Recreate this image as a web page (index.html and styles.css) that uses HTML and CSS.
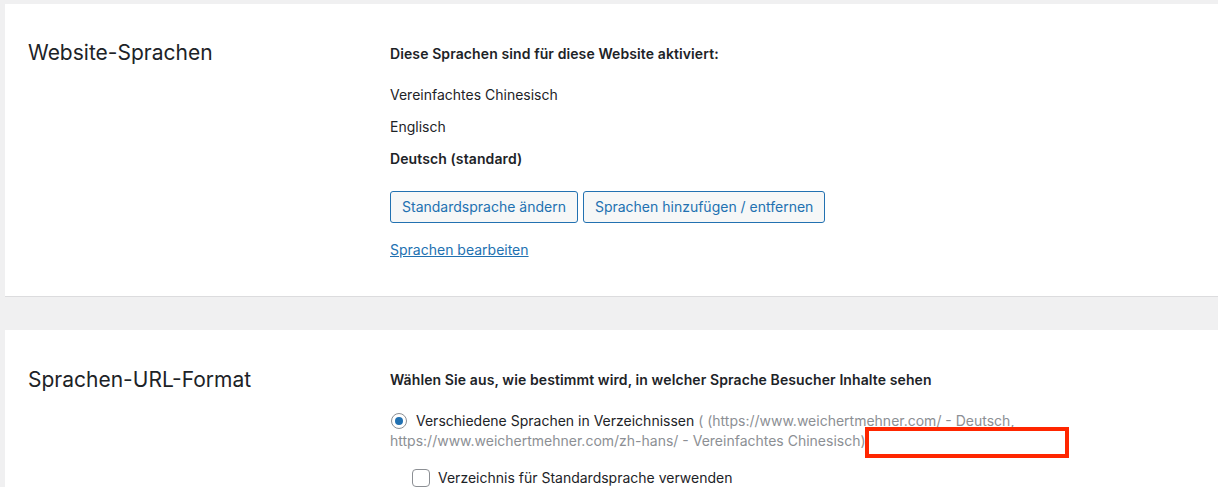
FILE: index.html
```html
<!DOCTYPE html>
<html lang="de">
<head>
<meta charset="utf-8">
<title>Sprachen</title>
<link rel="stylesheet" href="styles.css">
</head>
<body>
<section class="panel panel-first">
  <div class="row">
    <h2 class="label">Website-Sprachen</h2>
    <div class="content">
      <p class="lead">Diese Sprachen sind für diese Website aktiviert:</p>
      <ul class="langs">
        <li>Vereinfachtes Chinesisch</li>
        <li>Englisch</li>
        <li class="default">Deutsch (standard)</li>
      </ul>
      <div class="buttons">
        <button class="btn">Standardsprache ändern</button>
        <button class="btn">Sprachen hinzufügen / entfernen</button>
      </div>
      <a class="link" href="#">Sprachen bearbeiten</a>
    </div>
  </div>
</section>
<section class="panel panel-second">
  <div class="row">
    <h2 class="label label-second">Sprachen-URL-Format</h2>
    <div class="content">
      <p class="lead">Wählen Sie aus, wie bestimmt wird, in welcher Sprache Besucher Inhalte sehen</p>
      <div class="option">
        <span class="radio"></span><span class="opt-title">Verschiedene Sprachen in Verzeichnissen</span> <span class="hint">( (https://www.weichertmehner.com/ - Deutsch, https://www.weichertmehner.com/zh-hans/ - Vereinfachtes Chinesisch)<span class="mark-wrap"> )<span class="redbox"></span></span></span>
      </div>
      <div class="suboption">
        <span class="checkbox"></span><span>Verzeichnis für Standardsprache verwenden</span>
      </div>
    </div>
  </div>
</section>
</body>
</html>
```
FILE: styles.css
```css
* { box-sizing: border-box; }
html, body { margin: 0; padding: 0; }
body {
  background: #f0f0f1;
  font-family: Inter, "Liberation Sans", Arial, sans-serif;
  font-size: 14px;
  color: #1d2327;
  width: 1218px;
  height: 487px;
  overflow: hidden;
}
.panel {
  background: #fff;
  margin-left: 5px;
}
.panel-first {
  margin-top: 4px;
  height: 293px;
  border-bottom: 1px solid #dcdcde;
}
.panel-second {
  margin-top: 33px;
  height: 160px;
}
.row {
  display: flex;
}
.label {
  margin: 0;
  width: 385px;
  padding-left: 23px;
  padding-top: 34px;
  font-size: 21px;
  font-weight: 400;
  line-height: 30px;
  color: #1d2327;
}
.label-second { padding-top: 35px; }
.content {
  padding-top: 40px;
  flex: 1;
}
.lead {
  margin: 0;
  font-weight: 600;
  line-height: 20px;
  font-size: 14px;
  letter-spacing: 0.1px;
}
.langs {
  list-style: none;
  margin: 15px 0 0;
  padding: 0;
}
.langs li {
  line-height: 32px;
  height: 32px;
}
.langs .default { font-weight: 600; letter-spacing: 0.1px; }
.buttons {
  display: flex;
  gap: 5px;
  margin-top: 16px;
}
.btn {
  font-family: inherit;
  font-size: 14px;
  color: #2271b1;
  background: #f6f7f7;
  border: 1px solid #2271b1;
  border-radius: 3px;
  height: 32px;
  padding: 0 11px;
  line-height: 30px;
}
.link {
  display: inline-block;
  margin-top: 17px;
  line-height: 20px;
  color: #2271b1;
  text-decoration: underline;
}
.option {
  margin-top: 21px;
  line-height: 20px;
  padding-right: 190px;
}
.radio {
  display: inline-block;
  width: 16px;
  height: 16px;
  border: 1px solid #8c8f94;
  border-radius: 50%;
  vertical-align: -3px;
  margin-right: 9px;
  margin-left: 1px;
  position: relative;
}
.radio::after {
  content: "";
  position: absolute;
  left: 3px;
  top: 3px;
  width: 8px;
  height: 8px;
  border-radius: 50%;
  background: #2271b1;
}
.hint { color: #8c8f94; }
.mark-wrap { position: relative; }
.redbox {
  position: absolute;
  left: -1px;
  top: -5px;
  width: 204px;
  height: 31px;
  border: 4px solid #ff2600;
  background: #fff;
}
.suboption {
  margin-top: 17px;
  padding-left: 22px;
  line-height: 20px;
  display: flex;
  align-items: center;
}
.checkbox {
  display: inline-block;
  width: 18px;
  height: 18px;
  border: 1px solid #8c8f94;
  border-radius: 4px;
  margin-right: 8px;
}
```
